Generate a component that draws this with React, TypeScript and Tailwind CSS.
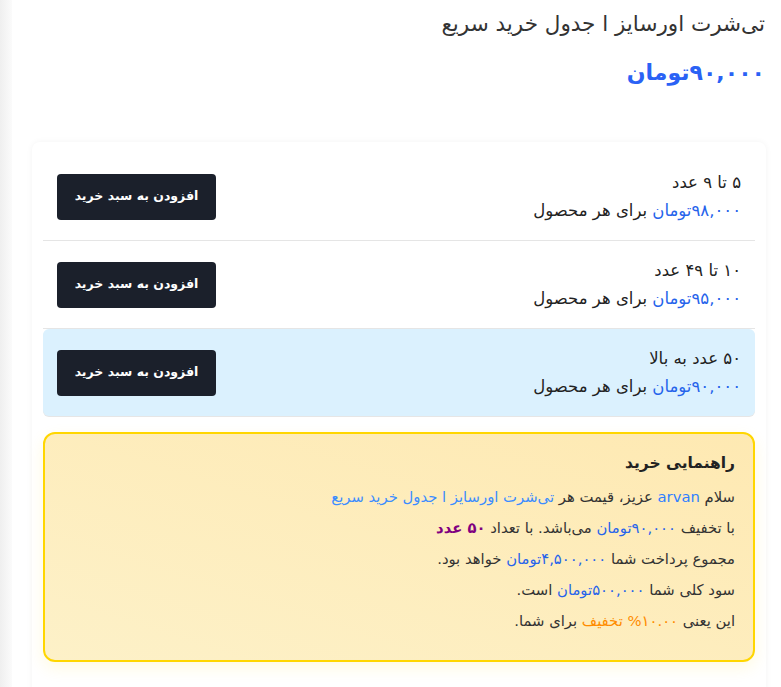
import React from "react";

const font = { fontFamily: '"DejaVu Sans", "Noto Sans", sans-serif' };

type Tier = { range: string; price: string; active?: boolean };

const tiers: Tier[] = [
  { range: "۵ تا ۹ عدد", price: "۹۸,۰۰۰" },
  { range: "۱۰ تا ۴۹ عدد", price: "۹۵,۰۰۰" },
  { range: "۵۰ عدد به بالا", price: "۹۰,۰۰۰", active: true },
];

function TierRow({ tier }: { tier: Tier }) {
  return (
    <div
      className={
        "flex items-center justify-between px-[14px] py-5 " +
        (tier.active ? "rounded-md bg-[#dbf1fe] shadow-[0_1px_0_#e6e6e6]" : "border-b border-[#e5e5e5]")
      }
    >
      <div className="flex flex-col gap-[9px] text-[#222]">
        <div className="text-[16.5px] leading-[19px]">{tier.range}</div>
        <div className="text-[16.5px] leading-[19px]">
          <span className="text-[#2563eb]">{tier.price}تومان</span> برای هر محصول
        </div>
      </div>
      <button className="h-[46px] w-[159px] rounded-[4px] bg-[#1b202b] text-[12.5px] font-bold text-white">
        افزودن به سبد خرید
      </button>
    </div>
  );
}

export default function App() {
  return (
    <div className="flex min-h-[687px] bg-white" style={font}>
      <div className="w-[12px] shrink-0 bg-gradient-to-r from-[#efefef] to-[#fbfbfb]" />
      <div dir="rtl" className="flex-1 overflow-hidden">
        <div className="pr-[16px] pt-[7px]">
          <h1 className="text-[21.5px] leading-[33px] text-[#333]">تی‌شرت اورسایز ا جدول خرید سریع</h1>
          <div className="mt-[18px] text-[22px] font-bold leading-[30px] text-[#2a62f5]">۹۰,۰۰۰تومان</div>
        </div>
        <div className="ml-[20px] mr-[15px] mt-[54px] rounded-lg bg-white p-[11px] shadow-[0_0_6px_rgba(0,0,0,0.05)]">
          {tiers.map((t, i) => (
            <TierRow key={i} tier={t} />
          ))}
          <div className="mt-[16px] rounded-xl border-2 border-[#ffd600] bg-gradient-to-bl from-[#fee9b2] to-[#fdf1c8] px-[18px] pb-[24px] pt-[15px] shadow-[0_6px_16px_rgba(255,214,0,0.12)]">
            <h2 className="text-[15.5px] font-bold leading-[28px] text-[#222]">راهنمایی خرید</h2>
            <div className="mt-[4px] text-[14.8px] leading-[31px] text-[#333]">
              <p>
                سلام <span className="text-[#2f80ff]">arvan</span> عزیز، قیمت هر{" "}
                <span className="text-[#3b8cff]">تی‌شرت اورسایز ا جدول خرید سریع</span>
              </p>
              <p>
                با تخفیف <span className="text-[#2563eb]">۹۰,۰۰۰تومان</span> می‌باشد. با تعداد{" "}
                <span className="font-bold text-[#800080]">۵۰ عدد</span>
              </p>
              <p>
                مجموع پرداخت شما <span className="text-[#2563eb]">۴,۵۰۰,۰۰۰تومان</span> خواهد بود.
              </p>
              <p>
                سود کلی شما <span className="text-[#2563eb]">۵۰۰,۰۰۰تومان</span> است.
              </p>
              <p>
                این یعنی <span className="text-[#ff8c00]">۱۰.۰۰% تخفیف</span> برای شما.
              </p>
            </div>
          </div>
          <div className="h-[30px]" />
        </div>
      </div>
    </div>
  );
}
